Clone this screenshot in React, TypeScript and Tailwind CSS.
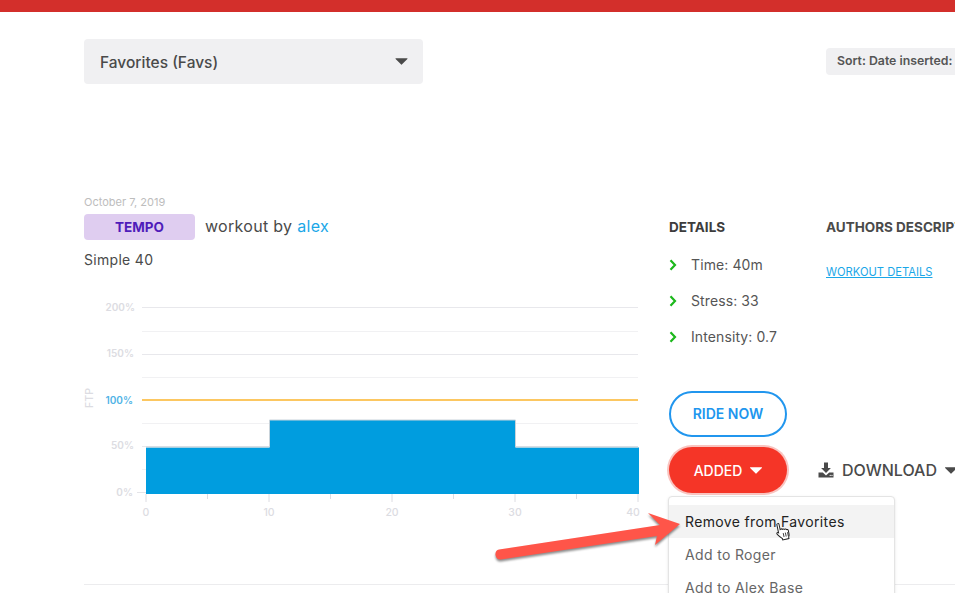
import React from "react";

const chartFont = "Inter, sans-serif";

// y positions of the FTP gridlines
const gridLines = [307, 331, 354, 377, 423, 446, 469];

function WorkoutChart() {
  return (
    <svg width="560" height="240" viewBox="84 290 560 240" className="block">
      {gridLines.map((y) => (
        <line
          key={y}
          x1="142"
          x2="638"
          y1={y + 0.5}
          y2={y + 0.5}
          stroke={y === 307 || y === 354 || y === 446 ? "#e8e8ec" : "#f1f1f3"}
          strokeWidth="1"
        />
      ))}
      <line x1="142" x2="638" y1="400" y2="400" stroke="#fbb42c" strokeWidth="1.6" />
      <path
        d="M146 494V447.5H269.5V420H515.5V447.5H639V494Z"
        fill="#009ddf"
        stroke="none"
      />
      <path d="M146 447H269.5V420H515.5V447H638" fill="none" stroke="#c9d3da" strokeWidth="1" />
      <g fill="#dcdce2" fontFamily={chartFont} fontSize="10" fontWeight="600" textAnchor="end">
        <text x="135" y="311">200%</text>
        <text x="134" y="357">150%</text>
        <text x="134" y="449">50%</text>
        <text x="133" y="496">0%</text>
      </g>
      <text x="133" y="404" fill="#4fb3e6" fontFamily={chartFont} fontSize="10" fontWeight="600" textAnchor="end">
        100%
      </text>
      <text
        x="93"
        y="398"
        fill="#dcdce2"
        fontFamily={chartFont}
        fontSize="10.5"
        fontWeight="500"
        textAnchor="middle"
        transform="rotate(-90 93 398)"
      >
        FTP
      </text>
      <line x1="137" x2="146" y1="492.5" y2="492.5" stroke="#e4e4e8" />
      {[146, 207.5, 269, 330.5, 392, 453.5, 515, 576.5, 638].map((x, i) => (
        <line
          key={x}
          x1={x}
          x2={x}
          y1="494"
          y2={i % 2 === 0 ? 502 : 499}
          stroke="#dcdce2"
        />
      ))}
      <g fill="#dcdce2" fontFamily={chartFont} fontSize="10.5" fontWeight="500" textAnchor="middle">
        <text x="146" y="516">0</text>
        <text x="269" y="516">10</text>
        <text x="392" y="516">20</text>
        <text x="515" y="516">30</text>
        <text x="633" y="516">40</text>
      </g>
    </svg>
  );
}

function Chevron() {
  return (
    <svg width="8" height="12" viewBox="0 0 8 12" className="shrink-0">
      <path d="M1.5 1.2L6 6l-4.5 4.8" fill="none" stroke="#1cb81c" strokeWidth="2.2" />
    </svg>
  );
}

function Caret({ className }: { className: string }) {
  return (
    <svg viewBox="0 0 12 7" className={className} fill="currentColor">
      <path d="M0.4 0.3h11.2a.4.4 0 0 1 .3.7L6.3 6.6a.4.4 0 0 1-.6 0L.1 1a.4.4 0 0 1 .3-.7z" />
    </svg>
  );
}

function DownloadIcon() {
  return (
    <svg width="16" height="16" viewBox="0 0 16 16" fill="#4a4a4a" className="shrink-0">
      <path d="M6 0.5h4V6h2.9L8 11 3.1 6H6z" />
      <path d="M0.5 10.5h4.300L8 13.500l3.200-3h4.300v5H0.500z" />
      <circle cx="12.200" cy="13.400" r=".6" fill="#fff" />
      <circle cx="14" cy="13.400" r=".6" fill="#fff" />
    </svg>
  );
}

// Screenshot annotation arrow, sits over the chart and the dropdown
function Arrow() {
  return (
    <svg
      width="200"
      height="70"
      viewBox="490 505 200 70"
      className="absolute left-[490px] top-[505px] pointer-events-none drop-shadow-[0_2px_1px_rgba(0,0,0,0.45)]"
    >
      <path
        d="M501 559.500 L657 536 L655 545 L680 524 L648 513 L660 525 L499 549.500 Q495 550.500 495.500 555 Q496.500 560 501 559.500Z"
        fill="#ff5549"
      />
    </svg>
  );
}

function HandCursor() {
  return (
    <svg
      width="17"
      height="20"
      viewBox="0 0 16 20"
      className="absolute left-[775px] top-[522px] -rotate-12 pointer-events-none"
    >
      <path
        d="M3 1.500c0-1.200 2.200-1.200 2.200 0V7l.6-.3c.8-.3 1.500 0 1.700.5.8-.4 1.600-.2 1.900.4.900-.4 1.800 0 2 .7.800-.2 1.600.2 1.600 1.200v3.700c0 1.200-.5 2-1 2.800v1.600H5.600v-1.300C4.400 15 2.700 13 1.400 11 .6 9.800 1.800 8.700 3 9.800z"
        fill="#fff"
        stroke="#222"
        strokeWidth="1"
      />
      <path d="M7.500 11v4M9.700 11v4M11.900 11v4" stroke="#222" strokeWidth=".8" />
    </svg>
  );
}

export default function App() {
  return (
    <div className="relative w-[955px] h-[593px] overflow-hidden bg-white font-['Inter',sans-serif]">
      <div className="h-3 bg-[#d32f2b]" />

      {/* Filter row */}
      <div className="flex items-center pl-[84px] pt-[27px]">
        <div className="flex items-center justify-between shrink-0 w-[339px] h-[45px] pl-4 pr-[15px] rounded bg-[#f0f0f2]">
          <span className="pt-[2px] text-[15.5px] font-medium text-[#4a4a4a]">Favorites (Favs)</span>
          <Caret className="w-[13px] h-[7px] text-[#4a4a4a]" />
        </div>
        <div className="flex items-center shrink-0 ml-[403px] w-[200px] h-[27px] pl-[11px] rounded-sm bg-[#f0f0f2]">
          <span className="text-[12.3px] font-semibold text-[#555] whitespace-nowrap">Sort: Date inserted:</span>
        </div>
      </div>

      {/* Workout card */}
      <div className="flex pl-[84px] pt-[111px]">
        <div className="w-[585px] shrink-0">
          <div className="text-[11px] leading-[14px] text-[#bdbdbd]">October 7, 2019</div>
          <div className="flex items-center gap-[10px] mt-[5px]">
            <div className="flex items-center justify-center w-[111px] h-[26px] rounded bg-[#dfcdf0] text-[13.5px] font-bold text-[#4f1cba]">
              TEMPO
            </div>
            <div className="text-[16px] tracking-[0.3px] text-[#4a4a4a] -mt-[3px]">
              workout by <span className="text-[#1aa7e8]">alex</span>
            </div>
          </div>
          <div className="mt-[10px] text-[14px] tracking-[0.3px] leading-[20px] text-[#4a4a4a]">Simple 40</div>
          <div className="mt-[20px]">
            <WorkoutChart />
          </div>
        </div>

        <div className="flex-1 pt-[23px]">
          <div className="flex">
            <div className="w-[157px] shrink-0">
              <div className="text-[13.5px] leading-[18px] font-bold text-[#3c3c3c]">DETAILS</div>
              <ul className="mt-[19px] flex flex-col gap-4 text-[14px] tracking-[0.1px] leading-5 text-[#555]">
                {["Time: 40m", "Stress: 33", "Intensity: 0.7"].map((item) => (
                  <li key={item} className="flex items-center gap-[14px]">
                    <Chevron />
                    {item}
                  </li>
                ))}
              </ul>
            </div>
            <div>
              <div className="text-[13.5px] leading-[18px] font-bold text-[#4a4a4a] whitespace-nowrap">AUTHORS DESCRIPTION</div>
              <a className="block mt-[28px] text-[11.2px] leading-4 text-[#1aa7e8] underline">WORKOUT DETAILS</a>
            </div>
          </div>

          <button className="flex items-center justify-center w-[118px] h-[46px] mt-[44px] pb-[1px] rounded-full border-2 border-[#2196ee] bg-white text-[14px] font-semibold text-[#2196ee]">
            RIDE NOW
          </button>

          <div className="flex items-center mt-[10px]">
            <button className="flex items-center justify-center gap-2 w-[118px] h-[46px] rounded-full bg-[#f53527] ring-2 ring-[#f9c4c0] text-[14px] font-medium text-white">
              ADDED
              <Caret className="w-3 h-[7px] text-white" />
            </button>
            <div className="flex items-center gap-2 ml-[31px] text-[16px] font-medium text-[#4a4a4a] whitespace-nowrap">
              <DownloadIcon />
              DOWNLOAD
              <Caret className="w-3 h-[7px] shrink-0 text-[#4a4a4a]" />
            </div>
          </div>
        </div>
      </div>

      {/* Divider under the card */}
      <div className="absolute left-[84px] right-0 top-[584px] border-t border-[#ececee]" />

      {/* Open dropdown */}
      <div className="absolute left-[668px] top-[496px] w-[227px] h-[120px] pt-[8px] rounded border border-[#e4e4e4] bg-white shadow-sm text-[14px] tracking-[0.35px] text-[#666]">
        <div className="flex items-center h-[33px] pl-4 bg-[#f3f3f3] text-[#222]">Remove from Favorites</div>
        <div className="flex items-center h-[33px] pl-4">Add to Roger</div>
        <div className="flex items-center h-[33px] pl-4">Add to Alex Base</div>
      </div>

      <Arrow />
      <HandCursor />
    </div>
  );
}
